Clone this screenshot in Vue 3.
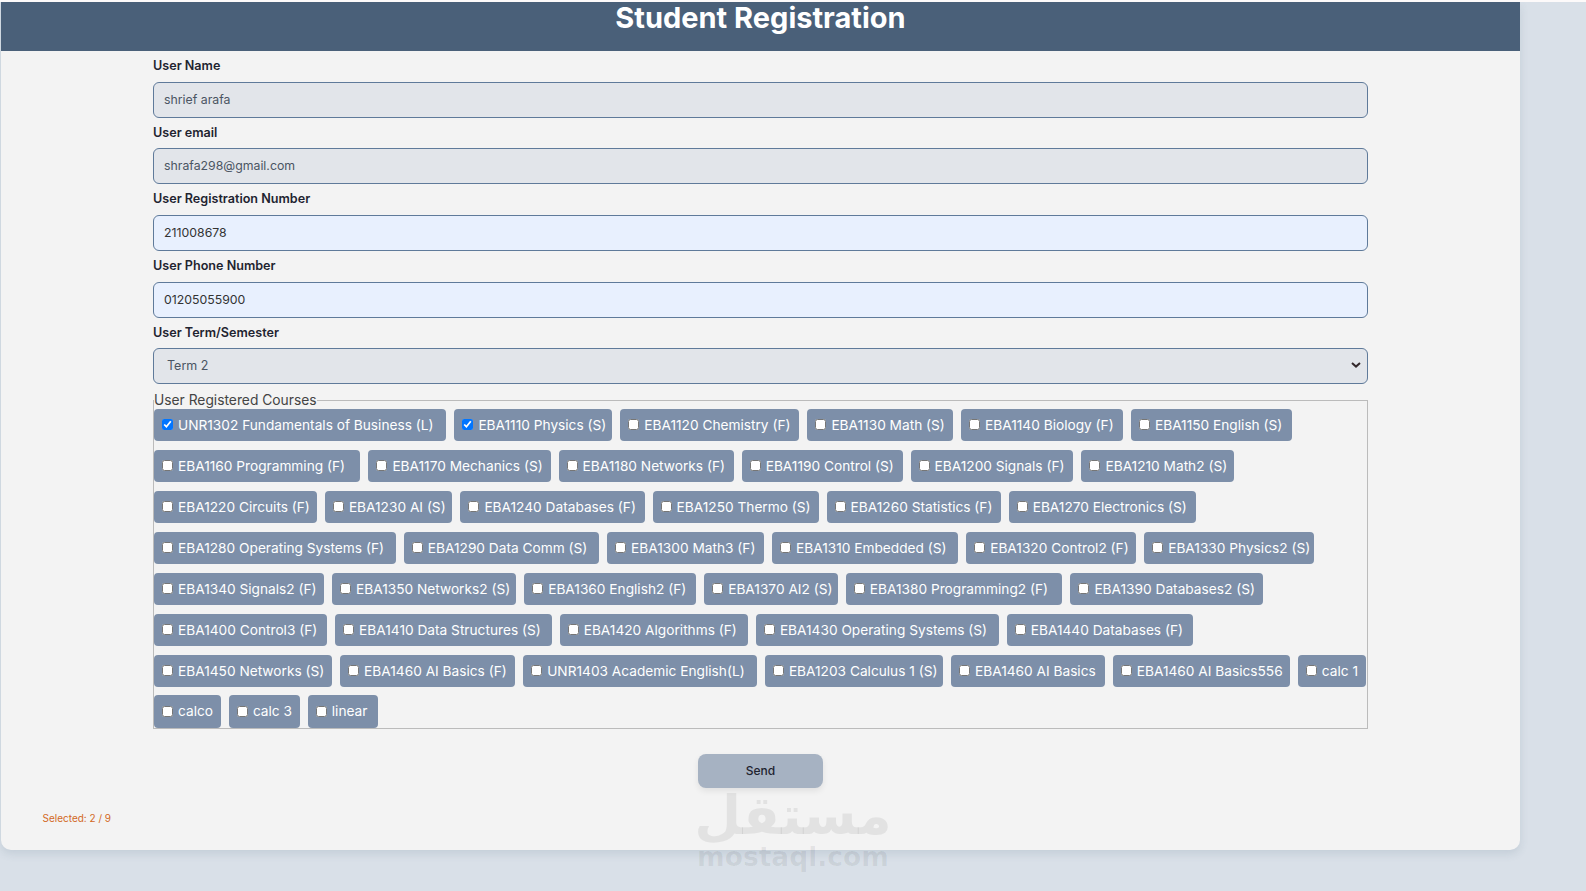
<script setup>
const rows = [
  [['UNR1302 Fundamentals of Business (L)', 292.4, true], ['EBA1110 Physics (S)', 157.9, true], ['EBA1120 Chemistry (F)', 179.1], ['EBA1130 Math (S)', 145.7], ['EBA1140 Biology (F)', 161.9], ['EBA1150 English (S)', 160.8]],
  [['EBA1160 Programming (F)', 206.4], ['EBA1170 Mechanics (S)', 182.2], ['EBA1180 Networks (F)', 175.1], ['EBA1190 Control (S)', 160.9], ['EBA1200 Signals (F)', 162.9], ['EBA1210 Math2 (S)', 152.7]],
  [['EBA1220 Circuits (F)', 162.9], ['EBA1230 AI (S)', 127.5], ['EBA1240 Databases (F)', 184.2], ['EBA1250 Thermo (S)', 166], ['EBA1260 Statistics (F)', 174.1], ['EBA1270 Electronics (S)', 187.1]],
  [['EBA1280 Operating Systems (F)', 241.8], ['EBA1290 Data Comm (S)', 195.3], ['EBA1300 Math3 (F)', 156.9], ['EBA1310 Embedded (S)', 186.2], ['EBA1320 Control2 (F)', 170], ['EBA1330 Physics2 (S)', 169.9]],
  [['EBA1340 Signals2 (F)', 170], ['EBA1350 Networks2 (S)', 184.2], ['EBA1360 English2 (F)', 172], ['EBA1370 AI2 (S)', 133.6], ['EBA1380 Programming2 (F)', 216.6], ['EBA1390 Databases2 (S)', 192.2]],
  [['EBA1400 Control3 (F)', 173.1], ['EBA1410 Data Structures (S)', 216.6], ['EBA1420 Algorithms (F)', 188.2], ['EBA1430 Operating Systems (S)', 242.9], ['EBA1440 Databases (F)', 186.1]],
  [['EBA1450 Networks (S)', 178.1], ['EBA1460 AI Basics (F)', 175.1], ['UNR1403 Academic English(L)', 233.7], ['EBA1203 Calculus 1 (S)', 178.1], ['EBA1460 AI Basics', 153.8], ['EBA1460 AI Basics556', 177.1], ['calc 1', 67.8]],
  [['calco', 66.9], ['calc 3', 70.9], ['linear', 69.8]]
]
</script>

<template>
  <div class="page">
    <div class="card">
      <header class="head"><h1>Student Registration</h1></header>
      <form class="form" @submit.prevent>
        <label class="lab">User Name</label>
        <input class="field" value="shrief arafa" readonly />
        <label class="lab">User email</label>
        <input class="field" value="shrafa298@gmail.com" readonly />
        <label class="lab">User Registration Number</label>
        <input class="field auto" value="211008678" />
        <label class="lab">User Phone Number</label>
        <input class="field auto" value="01205055900" />
        <label class="lab">User Term/Semester</label>
        <div class="selwrap">
          <select class="field sel"><option>Term 2</option></select>
          <svg class="chev" width="10" height="6" viewBox="0 0 10 6" fill="none">
            <path d="M1 1l4 3.6L9 1" stroke="#33282b" stroke-width="2" />
          </svg>
        </div>
        <fieldset class="courses">
          <legend>User Registered Courses</legend>
          <div v-for="(row, i) in rows" :key="i" class="row">
            <label v-for="c in row" :key="c[0]" class="chip" :style="{ width: c[1] + 'px' }">
              <input type="checkbox" :checked="c[2]" />
              <span>{{ c[0] }}</span>
            </label>
          </div>
        </fieldset>
        <div class="actions"><button class="send">Send</button></div>
      </form>
      <p class="count">Selected: 2 / 9</p>
    </div>
    <div class="mark" aria-hidden="true">
      <div class="ar">مستقل</div>
      <div class="en">mostaql.com</div>
    </div>
  </div>
</template>

<style>
html, body { margin: 0; padding: 0; }
</style>

<style scoped>
.page {
  position: relative;
  height: 891px;
  overflow: hidden;
  background: #d9e0e8;
  border-top: 2px solid #fdfafa;
  padding-left: 1px;
  box-sizing: border-box;
  font-family: Inter, "Open Sans", sans-serif;
}
.card {
  position: relative;
  width: 1519px;
  height: 848px;
  background: #f3f3f3;
  border-radius: 0 0 10px 10px;
  box-shadow: 0 4px 8px rgba(74, 96, 122, 0.14);
}
.head {
  height: 49px;
  background: #4a6079;
  text-align: center;
}
.head h1 {
  margin: 0;
  color: #fff;
  font-size: 29px;
  line-height: 32px;
  font-weight: 700;
}
.form {
  width: 1215px;
  margin-left: 152px;
  display: flex;
  flex-direction: column;
}
.lab {
  height: 30.65px;
  line-height: 29.5px;
  font-size: 12.6px;
  font-weight: 600;
  color: #1f2430;
}
.field {
  box-sizing: border-box;
  display: block;
  width: 100%;
  height: 36px;
  padding: 0 10px 1px;
  border: 1px solid #5f7a9a;
  border-radius: 6px;
  background: #e2e5ea;
  color: #4b5563;
  font: 12.3px Inter, sans-serif;
  outline: none;
}
.auto { background: #e8f0fe; color: #333; }
.sel {
  padding-left: 13px;
  appearance: none;
  font-size: 12.5px;
}
.selwrap { position: relative; }
.chev {
  position: absolute;
  right: 7px;
  top: 14px;
  pointer-events: none;
}
.courses {
  margin: 8.75px 0 0;
  padding: 1px 0 0;
  border: 1px solid #bbb;
  min-width: 0;
  height: 336px;
  box-sizing: border-box;
}
legend {
  padding: 0;
  font-size: 13.8px;
  line-height: 15px;
  color: #444;
  position: relative;
  top: 0.5px;
}
.row {
  display: flex;
  gap: 8px;
  height: 41px;
}
.row:last-child { margin-top: -1px; }
.chip {
  box-sizing: border-box;
  height: 32px;
  display: flex;
  align-items: center;
  gap: 5px;
  padding-left: 8px;
  background: #7d8fa9;
  border-radius: 4px;
  color: #fff;
  font-size: 13.7px;
  white-space: nowrap;
}
.chip input { margin: 0; width: 11px; height: 11px; flex: none; }
.row:last-child .chip { height: 33px; }
.actions {
  display: flex;
  justify-content: center;
  margin-top: 25px;
}
.send {
  width: 125px;
  height: 34px;
  border: 0;
  border-radius: 8px;
  background: #a6b2c2;
  color: #1f2430;
  font: 500 12px Inter, sans-serif;
  box-shadow: 0 3px 6px rgba(0, 0, 0, 0.08);
}
.count {
  position: absolute;
  left: 41.5px;
  top: 810px;
  margin: 0;
  font-size: 10px;
  color: #d2691e;
}
.mark {
  position: absolute;
  left: 663px;
  top: 788px;
  width: 260px;
  text-align: center;
  color: rgba(0, 0, 0, 0.065);
  font-family: "DejaVu Sans", sans-serif;
  font-weight: 700;
  pointer-events: none;
}
.ar { font-size: 54px; line-height: 52px; }
.en { font-size: 26.5px; line-height: 30px; }
</style>
